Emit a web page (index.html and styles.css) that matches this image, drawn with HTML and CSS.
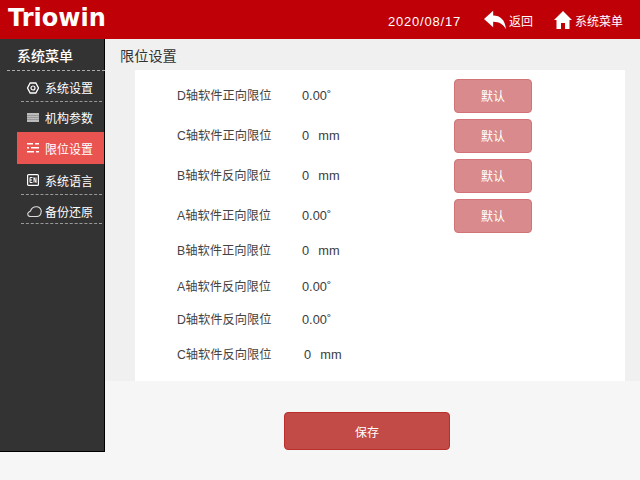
FILE: index.html
```html
<!DOCTYPE html>
<html lang="zh-CN">
<head>
    <meta charset="UTF-8">
    <title>限位设置</title>
    <link rel="stylesheet" href="styles.css">
</head>
<body>
    <header class="topbar">
        <div class="logo">Triowin</div>
        <div class="top-date">2020/08/17</div>
        <div class="top-link top-back">
            <svg width="22" height="20" viewBox="0 0 24 20"><path fill="#fff" d="M0 9 10 0v5c8 0 13 5 14 15-3-5-7-8-14-8v6z"/></svg>
            <span>返回</span>
        </div>
        <div class="top-link">
            <svg width="18" height="18" viewBox="0 0 18 18"><path fill="#fff" d="M9 0 18 9h-2.500v9H11v-6H7v6H2.500V9H0z"/></svg>
            <span>系统菜单</span>
        </div>
    </header>
    <div class="middle">
        <aside class="sidebar">
            <div class="side-title">系统菜单</div>
            <div class="side-item item-settings dashed">
                <svg width="12" height="12" viewBox="0 0 12 12"><path fill="none" stroke="#fff" stroke-width="1.300" d="M3.200 1h5.600L11.500 6 8.800 11H3.200L.5 6z"/><circle cx="6" cy="6" r="2" fill="none" stroke="#fff" stroke-width="1.200"/></svg>
                <span>系统设置</span>
            </div>
            <div class="side-item item-params">
                <svg width="12" height="9" viewBox="0 0 12 9"><path fill="#bbb" d="M0 0h12v9H0z"/><path fill="#777" d="M0 2h12v.6H0zM0 4.200h12v.6H0zM0 6.400h12v.6H0z"/></svg>
                <span>机构参数</span>
            </div>
            <div class="side-item active">
                <svg width="12" height="10" viewBox="0 0 12 10"><path fill="#fff" d="M0 0h6v1.500H0zM8 0h4v1.500H8zM0 4h2v1.500H0zM4 4h8v1.500H4zM0 8h7v1.500H0zM9 8h3v1.500H9z"/></svg>
                <span>限位设置</span>
            </div>
            <div class="side-item item-lang dashed">
                <svg width="12" height="12" viewBox="0 0 12 12"><rect x=".6" y=".6" width="10.800" height="10.800" rx="1" fill="none" stroke="#fff" stroke-width="1.200"/><path fill="none" stroke="#fff" d="M5.500 3.500H3v5h2.500M3 6h2M7 8.500v-5L9 8.500v-5"/></svg>
                <span>系统语言</span>
            </div>
            <div class="side-item item-backup dashed">
                <svg width="15" height="11" viewBox="0 0 15 11"><path fill="none" stroke="#ddd" stroke-width="1.100" d="M3.500 10.500C1.500 10.500.5 9 .8 7.500 1 6 2.500 5.500 3.500 5 4.500 2 7 .5 10 .8c3 .3 4.500 2.700 4.200 5-.2 2.500-2 4.700-4.700 4.700z"/></svg>
                <span>备份还原</span>
            </div>
        </aside>
        <main class="content">
            <div class="panel">
                <h1 class="panel-title">限位设置</h1>
                <div class="card">
                    <div class="row"><span class="label">D轴软件正向限位</span><span class="value">0.00˚</span><button class="btn-default">默认</button></div>
                    <div class="row"><span class="label">C轴软件正向限位</span><span class="value">0 &nbsp;mm</span><button class="btn-default">默认</button></div>
                    <div class="row"><span class="label">B轴软件反向限位</span><span class="value">0 &nbsp;mm</span><button class="btn-default">默认</button></div>
                    <div class="row"><span class="label">A轴软件正向限位</span><span class="value">0.00˚</span><button class="btn-default">默认</button></div>
                    <div class="row"><span class="label">B轴软件正向限位</span><span class="value">0 &nbsp;mm</span></div>
                    <div class="row"><span class="label">A轴软件反向限位</span><span class="value">0.00˚</span></div>
                    <div class="row"><span class="label">D轴软件反向限位</span><span class="value">0.00˚</span></div>
                    <div class="row row-last"><span class="label">C轴软件反向限位</span><span class="value">0 &nbsp;mm</span></div>
                </div>
            </div>
            <div class="actions">
                <button class="btn-save">保存</button>
            </div>
        </main>
    </div>
</body>
</html>
```

FILE: styles.css
```css
* {
    box-sizing: border-box;
}
html, body {
    margin: 0;
    height: 100%;
    overflow: hidden;
}
body {
    width: 640px;
    height: 480px;
    background: #f6f6f6;
    font-family: "Liberation Sans", "Noto Sans CJK SC", sans-serif;
    font-size: 12px;
    color: #333;
}
.topbar {
    height: 39px;
    background: #c00007;
    color: #fff;
    display: flex;
    align-items: center;
    padding-left: 8px;
}
.logo {
    font-family: "DejaVu Sans", sans-serif;
    font-weight: bold;
    font-size: 24px;
    width: 380px;
    margin-top: -3px;
}
.top-date {
    font-size: 13px;
    letter-spacing: 0.8px;
    width: 96px;
    padding-top: 3px;
}
.top-link {
    display: flex;
    align-items: center;
    gap: 3px;
    font-size: 12px;
    padding-top: 1px;
}
.top-back {
    width: 70px;
}
.middle {
    display: flex;
    height: 413px;
}
.sidebar {
    width: 105px;
    background: #333;
    border-right: 1px solid #000;
    border-bottom: 1px solid #000;
    color: #fff;
    padding-left: 6px;
}
.side-title {
    height: 32px;
    line-height: 35px;
    font-size: 14px;
    font-weight: 500;
    padding-left: 10px;
    margin-left: 1px;
    margin-right: -1px;
    border-bottom: 1px dashed #aaa;
}
.side-item {
    height: 31px;
    margin-left: 15px;
    margin-right: 2px;
    display: flex;
    align-items: center;
    gap: 6px;
    padding-left: 6px;
    font-size: 12px;
}
.item-settings {
    height: 31px;
    padding-top: 3px;
}
.item-params {
    height: 30px;
    padding-top: 1px;
}
.side-item.dashed {
    border-bottom: 1px dashed #999;
}
.side-item.active {
    height: 32px;
    margin-left: 11px;
    margin-right: 0;
    padding-left: 10px;
    background: #ea5450;
}
.item-lang {
    height: 29px;
    margin-top: 2px;
}
.item-backup {
    height: 29px;
    gap: 3px;
    padding-top: 4px;
}
.content {
    flex: 1;
    display: flex;
    flex-direction: column;
}
.panel {
    height: 342px;
    background: #f0f0f0;
    padding: 0 15px 0 30px;
    display: flex;
    flex-direction: column;
}
.panel-title {
    margin: 0 0 0 -15px;
    height: 31px;
    line-height: 34px;
    font-size: 14.200px;
    font-weight: normal;
    color: #333;
}
.card {
    flex: 1;
    background: #fff;
    padding: 5px 0 0 42px;
    display: grid;
    grid-template-rows: 40px 40px 40px 40px 30px 42px 24px 46px;
    align-content: start;
}
.row {
    display: flex;
    align-items: center;
    color: #444;
}
.label {
    width: 125px;
    font-size: 12.250px;
    padding-bottom: 1px;
}
.value {
    width: 152px;
    font-size: 12.800px;
    word-spacing: 1px;
    color: #3c3c3c;
}
.row-last .value {
    padding-left: 2px;
}
.btn-default {
    width: 78px;
    height: 34px;
    margin-top: 2px;
    padding-bottom: 3px;
    background: #d98a8c;
    border: 1px solid #d27477;
    border-radius: 4px;
    color: #fff;
    font: inherit;
}
.actions {
    flex: 1;
    display: flex;
    padding: 31px 0 0 179px;
}
.btn-save {
    width: 166px;
    height: 38px;
    background: #c24a47;
    border: 1px solid #bb2f2a;
    border-radius: 4px;
    color: #fff;
    font: inherit;
}
```
